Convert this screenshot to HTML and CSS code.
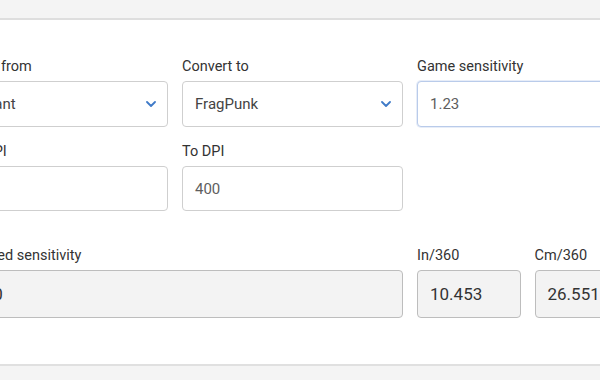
FILE: index.html
```html
<!DOCTYPE html>
<html lang="en">
<head>
<meta charset="utf-8">
<title>Sensitivity converter</title>
<link rel="stylesheet" href="styles.css">
</head>
<body>
<div class="card">
  <div class="grid">
    <div class="field">
      <label class="label">Convert from</label>
      <div class="box select">Valorant<svg class="chev" viewBox="0 0 10 6" width="10" height="6"><path d="M1 1l4 4 4-4" fill="none" stroke="#3f7ac8" stroke-width="1.8" stroke-linecap="round" stroke-linejoin="round"/></svg></div>
    </div>
    <div class="field">
      <label class="label">Convert to</label>
      <div class="box select">FragPunk<svg class="chev" viewBox="0 0 10 6" width="10" height="6"><path d="M1 1l4 4 4-4" fill="none" stroke="#3f7ac8" stroke-width="1.8" stroke-linecap="round" stroke-linejoin="round"/></svg></div>
    </div>
    <div class="field">
      <label class="label">Game sensitivity</label>
      <div class="box focus muted">1.23</div>
    </div>

    <div class="field row2">
      <label class="label">From DPI</label>
      <div class="box dpi muted">800</div>
    </div>
    <div class="field row2">
      <label class="label">To DPI</label>
      <div class="box dpi muted">400</div>
    </div>
    <div class="row2"></div>

    <div class="field row3 wide">
      <label class="label">Converted sensitivity</label>
      <div class="box result">2.460</div>
    </div>
    <div class="row3 split">
      <div class="field">
        <label class="label">In/360</label>
        <div class="box result">10.453</div>
      </div>
      <div class="field">
        <label class="label">Cm/360</label>
        <div class="box result">26.551</div>
      </div>
    </div>
  </div>
</div>
</body>
</html>
```

FILE: styles.css
```css
html, body {
  margin: 0;
  padding: 0;
}
body {
  width: 600px;
  height: 380px;
  overflow: hidden;
  background: #f4f4f4;
  font-family: Roboto, "Liberation Sans", Arial, sans-serif;
  padding-top: 18px;
  box-sizing: border-box;
}
.card {
  background: #fff;
  border-top: 2px solid #dedede;
  border-bottom: 2px solid #e0e0e0;
  height: 348px;
  box-sizing: border-box;
  padding-top: 37px;
  overflow: hidden;
}
.grid {
  margin-left: -53px;
  display: grid;
  grid-template-columns: 221px 221px 221px;
  column-gap: 14px;
}
.label {
  display: block;
  font-size: 14.5px;
  line-height: 20px;
  color: #333;
  margin-bottom: 4px;
  white-space: nowrap;
}
.box {
  box-sizing: border-box;
  height: 46px;
  border: 1px solid #cfcfcf;
  border-radius: 4px;
  padding: 0 12px;
  display: flex;
  align-items: center;
  font-size: 15px;
  color: #444;
  background: #fff;
}
.select {
  justify-content: space-between;
  padding-right: 10px;
}
.chev {
  display: block;
  margin-right: 1px;
}
.muted {
  color: #5e5e5e;
}
.focus {
  border-color: #b9cbea;
  box-shadow: 0 0 0 1px rgba(185, 203, 234, 0.35);
}
.row2 {
  margin-top: 15px;
}
.dpi {
  height: 45px;
}
.row3 {
  margin-top: 35px;
}
.wide {
  grid-column: span 2;
}
.split {
  display: grid;
  grid-template-columns: 1fr 1fr;
  column-gap: 14px;
}
.result {
  height: 48px;
  background: #f3f3f3;
  border-color: #bdbdbd;
  font-size: 17px;
  color: #333;
}
```
